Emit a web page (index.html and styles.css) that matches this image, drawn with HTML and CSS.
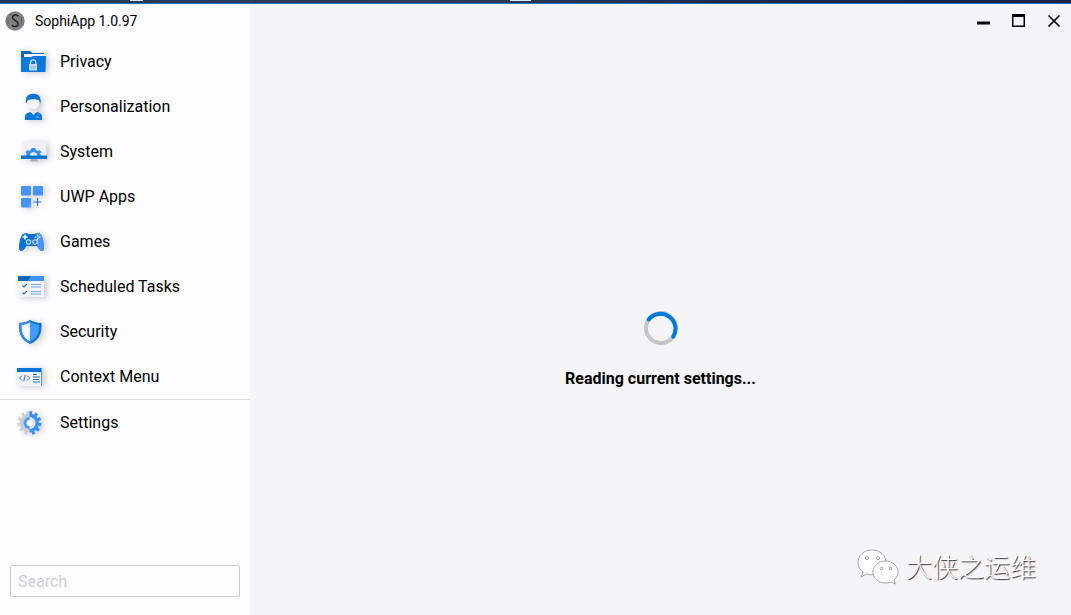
FILE: index.html
```html
<!DOCTYPE html>
<html lang="en">
<head>
<meta charset="utf-8">
<meta name="viewport" content="width=device-width, initial-scale=1">
<title>SophiApp 1.0.97</title>
<link rel="stylesheet" href="styles.css">
</head>
<body>
<div class="desktop-edge"><i class="glint glint-first"></i><i class="glint glint-second"></i></div>
<div class="window">
  <aside class="sidebar">
    <header class="brand">
      <svg class="logo" viewBox="0 0 20 20" aria-hidden="true"><circle cx="10" cy="10" r="9.7" fill="#808083"/><path d="M3 7v6M16.500 6v7M5 4l2-1" stroke="#5c5c60" fill="none"/><path d="M13 5.500C12 3.200 7.600 3.200 7.500 6.400c0 3.200 5.700 3 5.700 6.400 0 3-5 3.600-6.200 1.200" fill="none" stroke="#222" stroke-width="1.500"/></svg>
      <span>SophiApp 1.0.97</span>
    </header>
    <nav class="nav">
      <ul class="menu">
        <li><button class="item" type="button">
          <svg class="icon" viewBox="0 0 50 45" aria-hidden="true"><path d="M21 12h9l2 2h12v5H21z" fill="#0967c4"/><path d="M24 15h20v6H24z" fill="#eef3fa"/><path d="M21 18h10l2-1h13l-.5 16H21z" fill="#0c78e0"/><path d="M30.500 25v-1.500a2.700 2.700 0 0 1 5.400 0V25" fill="none" stroke="#d5e6f8" stroke-width="1.300"/><path d="M29 25h8v6.500h-8z" fill="#c5ddf6"/><path d="M31 27v3M33 27v3M35 27v3" stroke="#78aee8" stroke-width=".8"/></svg>
          Privacy</button></li>
        <li><button class="item" type="button">
          <svg class="icon" viewBox="0 0 50 45" aria-hidden="true"><path d="M30.500 22h6v8h-6z" fill="#dfe2e8"/><path d="M28 15c2-1.500 9-1.500 11 0v4c0 8-11 8-11 0z" fill="#f6f6f9"/><path d="M26 20c-1-7 2-10 6-10 4-1 10 1 8.500 10l-1.500-4c-3-1-8-1-11 0z" fill="#0c74d8"/><path d="M25 36v-4c0-2 3-3.500 5.500-4 1 1.800 5 1.800 6 0 2.500.5 5.500 2 5.500 4v4z" fill="#0d79df"/><path d="m30.500 28 3 3 3-3v-1h-6z" fill="#e4e7ee"/><path d="M36 33h3" stroke="#7dbbf8"/></svg>
          Personalization</button></li>
        <li><button class="item" type="button">
          <svg class="icon" viewBox="0 0 50 45" aria-hidden="true"><path d="M22 13h24v14H22z" fill="#f0f0f2"/><path d="m26 27 .7-2.500-1.200-1.500 2-2 1.600.9 1.600-.8L31.600 19h3.600l.9 2.100 1.600.8 1.700-.9 2 2-1.200 1.500.8 2.500z" fill="#3a8df0"/><path d="M29.800 27a3.700 3.700 0 0 1 7.400 0z" fill="#eef3fb"/><path d="M21 26.500h26V30H21z" fill="#0876d9"/><path d="M31 30h6l1 2.500h-8z" fill="#a6adb8"/></svg>
          System</button></li>
        <li><button class="item" type="button">
          <svg class="icon" viewBox="0 0 50 45" aria-hidden="true"><g fill="#4394f8"><rect x="21" y="12" width="10" height="9.500" rx=".8"/><rect x="33" y="12" width="10" height="9.500" rx=".8"/><rect x="21" y="24" width="10" height="9.500" rx=".8"/></g><path d="M37.500 24v8M33.500 28h8" stroke="#2874bd" stroke-width="1.200"/></svg>
          UWP Apps</button></li>
        <li><button class="item" type="button">
          <svg class="icon" viewBox="0 0 50 45" aria-hidden="true"><path d="M23 15c2-1.500 4-1 5.500 0h6c2-1 4-1.500 6 0 2.500 3 3.500 9 3.500 14 0 4-3.500 3.500-5 1l-2-3H26.500l-2 3c-2 2.500-5.500 3-5.500-1 0-5 1-11 4-14z" fill="#0a70d2"/><path d="M37 14.300c1.500-.4 2.500-.1 3.500.7 2.500 3 3.500 9 3.500 14 0 4-3.500 3.500-5 1l-2-3z" fill="#4597f7"/><path d="M25 15.500v5M22.500 18h5" stroke="#fff" stroke-width="1.500"/><g fill="#fff"><circle cx="37.500" cy="16.500" r=".9"/><circle cx="37.500" cy="20" r=".9"/><circle cx="35.500" cy="18.200" r=".9"/><circle cx="39.500" cy="18.200" r=".9"/></g><g fill="#1c79da" stroke="#d5e7fb" stroke-width="1.100"><circle cx="28.500" cy="23" r="2.200"/><circle cx="35" cy="23" r="2.200"/></g></svg>
          Games</button></li>
        <li><button class="item" type="button">
          <svg class="icon" viewBox="0 0 50 45" aria-hidden="true"><path d="M18 15h26v18H18z" fill="#f3f4f7"/><path d="M18 12h26v5H18z" fill="#4094f7"/><path d="M18 12h13l-3 5H18z" fill="#0866bd"/><path d="m22.500 21.500 1.500 1.500 3-3m-4.500 8.500L24 30l3-3" fill="none" stroke="#2775bd" stroke-width="1.200"/><path d="M31 20.500h10M31 23h10M31 27.500h10M31 30h10" stroke="#65a8f4"/></svg>
          Scheduled Tasks</button></li>
        <li><button class="item" type="button">
          <svg class="icon" viewBox="0 0 50 45" aria-hidden="true"><path d="M30.200 11c3 2 7 3 11.300 3 .5 9-1.500 17-11.300 21C20.500 31 18.500 23 19 14c4.300 0 8.200-1 11.200-3z" fill="#0973d3"/><path d="M30.200 13.200c-2.700 1.500-5.200 2.300-8.900 2.500-.1 7.500 1.700 13.300 8.900 16.800z" fill="#f3f7fc"/><path d="M30.200 13.200c2.700 1.500 5.200 2.300 8.900 2.500.1 7.500-1.700 13.300-8.900 16.800z" fill="#4799fa"/><path d="M30.200 11C27.200 13 23.300 14 19 14c-.5 9 1.500 17 11.200 21v-2.500c-7.200-3.500-9-9.300-8.900-16.800 3.700-.2 6.200-1 8.900-2.500z" fill="#348aed"/></svg>
          Security</button></li>
        <li><button class="item" type="button">
          <svg class="icon" viewBox="0 0 50 45" aria-hidden="true"><path d="M17 14h25v18H17z" fill="#f0f2f6"/><path d="M17 14h25v4H17z" fill="#0874d7"/><path d="M41.500 14v18" stroke="#4998ef"/><path d="m22 21.500-2.500 2.500 2.500 2.500M27 21.500l2.500 2.500-2.500 2.500M25.200 21l-1.500 6.500" fill="none" stroke="#347fbd"/><path d="M33 20.500h4M33 23h7M33 25.500h6M33 28h7" stroke="#1675c9" stroke-width="1.200"/></svg>
          Context Menu</button></li>
      </ul>
      <ul class="menu menu-secondary">
        <li><button class="item" type="button">
          <svg class="icon" viewBox="0 0 50 45" aria-hidden="true"><g fill="none" stroke-width="3"><path d="M29.500 12.500a10.500 10.500 0 0 0 0 21" stroke="#cccdd1" stroke-dasharray="2.700 2.800"/><path d="M29.500 12.500a10.500 10.500 0 0 1 0 21" stroke="#3489ea" stroke-dasharray="2.700 2.800"/></g><path d="M29.500 13.500a9.500 9.500 0 0 0 0 19z" fill="#cbccd0"/><path d="M29.500 13.500a9.500 9.500 0 0 1 0 19z" fill="#3b90f3"/><circle cx="29.500" cy="23" r="6" fill="#4b9afa"/><path d="M29.500 17a6 6 0 0 1 0 12z" fill="#e4e8ef"/><circle cx="29.500" cy="23" r="3" fill="#f8f9fc"/></svg>
          Settings</button></li>
      </ul>
    </nav>
    <div class="search"><input class="search-box" type="search" placeholder="Search" aria-label="Search"></div>
  </aside>
  <main class="content">
    <div class="controls">
      <button class="control" type="button" aria-label="Minimize"><svg viewBox="0 0 14 14"><path d="M0 7.500h13v3H0z"/></svg></button>
      <button class="control" type="button" aria-label="Maximize"><svg viewBox="0 0 14 14"><path fill-rule="evenodd" d="M0 0h13v13H0zM1.500 3v8.500h10V3z"/></svg></button>
      <button class="control" type="button" aria-label="Close"><svg viewBox="0 0 14 14"><path d="m1.500 1.500 11 11M12.500 1.500l-11 11" stroke="#000" stroke-width="1.700"/></svg></button>
    </div>
    <div class="loading" role="status">
      <svg class="spinner" viewBox="0 0 34 34" aria-hidden="true"><circle cx="17" cy="17" r="15" fill="none" stroke="#c5c5c7" stroke-width="4"/><path d="M4.750 8.400A15 15 0 0 1 29.250 25.600" fill="none" stroke="#0078dc" stroke-width="4" stroke-linecap="round"/></svg>
      <p class="message">Reading current settings...</p>
    </div>
    <div class="watermark" lang="zh-CN">
      <svg class="wechat" viewBox="0 0 42 38" aria-hidden="true"><g fill="#fff" stroke="#8c8c90" stroke-width=".8"><path d="M15 1C7 1 1 6.500 1 13.500c0 4.500 2 7.500 5 9.500l-2 5 5.500-3c10 3 19-3 19.500-11.500C29 6.500 23 1 15 1z"/><path d="M28.500 12C21.500 12 16 17 16 23s5.500 11 12.500 11c2 0 4-.5 5.500-1l4.500 2-1.500-4c2.500-2 4-4.500 4-8 0-6-5.500-11-12.500-11z"/><circle cx="10" cy="9" r="1.500"/><circle cx="21" cy="9" r="1.500"/><circle cx="24.500" cy="19.500" r="1.300"/><circle cx="33.500" cy="19.500" r="1.300"/></g></svg>
      <span class="watermark-name">大侠之运维</span>
    </div>
  </main>
</div>
</body>
</html>
```
FILE: styles.css
```css
* { box-sizing: border-box; }

body {
  margin: 0;
  min-height: 100vh;
  display: flex;
  flex-direction: column;
  font-family: Roboto, "Liberation Sans", sans-serif;
  font-size: 16px;
  color: #000;
}

button, input { font: inherit; color: inherit; }

.desktop-edge {
  position: relative;
  height: 4px;
  background: linear-gradient(90deg, #243a58, #2a3e60 40%, #1e2848 70%, #1c2345);
  border-bottom: 1px solid #2473b8;
}

.glint { position: absolute; top: 0; height: 1px; background: #dce8e8; }
.glint-first { left: 130px; width: 13px; }
.glint-second { left: 510px; width: 21px; }

.window { flex: 1; display: flex; }

.sidebar {
  width: 250px;
  flex: none;
  display: flex;
  flex-direction: column;
  background: #fdfdff;
}

.brand {
  height: 35px;
  padding: 0 0 1px 5px;
  display: flex;
  align-items: center;
  gap: 10px;
  font-size: 14px;
}

.logo { width: 20px; height: 20px; }

.nav { flex: 1; }
.menu { margin: 0; padding: 0; list-style: none; }
.menu-secondary { border-top: 1px solid #e0e0e3; }

.item {
  width: 100%;
  height: 45px;
  padding: 0;
  border: 0;
  background: none;
  display: flex;
  align-items: center;
  gap: 10px;
  text-align: left;
}

.icon {
  width: 50px;
  height: 45px;
  flex: none;
  filter: drop-shadow(3px 1px 3px rgba(0, 0, 0, 0.2));
}

.search { padding: 0 10px 18px; }

.search-box {
  display: block;
  width: 100%;
  height: 32px;
  padding: 0 7px;
  border: 1px solid #cbcbce;
  border-radius: 2px;
  background: #fdfdff;
  appearance: none;
}

.search-box::placeholder { color: #d0d0d4; opacity: 1; }

.content {
  flex: 1;
  display: grid;
  grid-template-rows: 35px 1fr 84px;
  background: #f5f5f8;
}

.controls { display: flex; justify-content: flex-end; }

.control {
  width: 35px;
  padding: 0 0 2px;
  border: 0;
  background: none;
  display: grid;
  place-items: center;
}

.control svg { width: 14px; height: 14px; }

.loading {
  display: flex;
  flex-direction: column;
  align-items: center;
  justify-content: center;
  gap: 24px;
  padding-top: 130px;
  align-self: center;
}

.spinner { width: 34px; height: 34px; }
.message { margin: 0; line-height: 20px; font-weight: 700; }

.watermark {
  display: flex;
  justify-content: flex-end;
  align-items: center;
  gap: 7px;
  padding: 0 35px 10px 0;
  color: #fff;
  font-family: "Noto Sans CJK SC", sans-serif;
  font-size: 26px;
  font-weight: 300;
  text-shadow: 1px 1px 1px #333;
}

.watermark-name { padding-bottom: 6px; }

.wechat { width: 42px; height: 38px; }
```
